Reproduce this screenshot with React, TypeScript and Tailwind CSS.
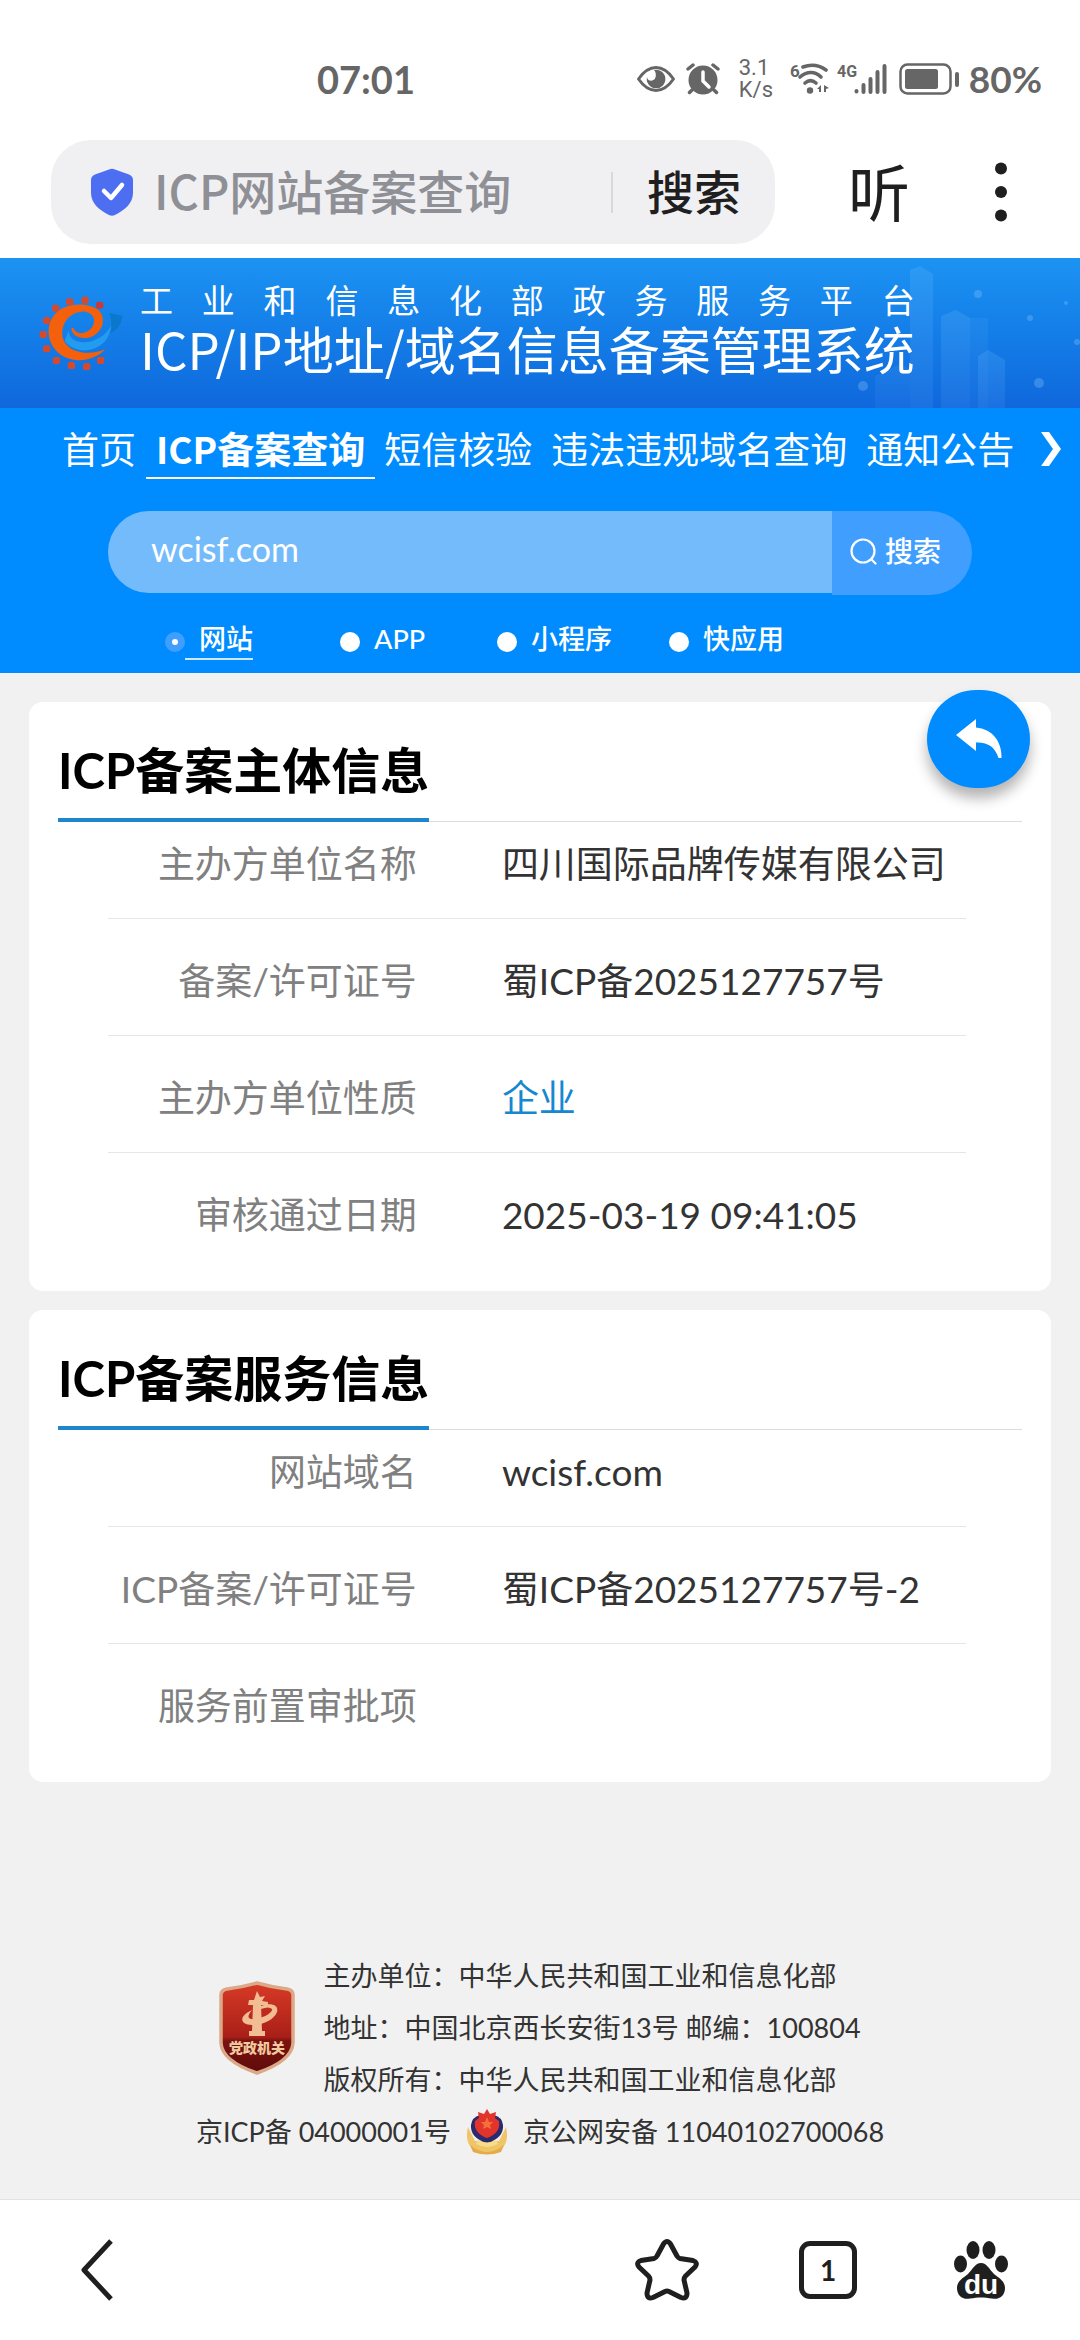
import React from "react";

const FONT = "font-[Lato,'Noto_Sans_CJK_SC',sans-serif]";
const CJK = "font-['Noto_Sans_CJK_SC',sans-serif]";

function StatusBar() {
  return (
    <div className="flex h-[140px] items-center pt-[18px] pr-[38px] pl-[317px] text-[#666]">
      <span className="text-[38px] leading-[48px] font-bold">07:01</span>
      <div className="ml-auto flex items-center">
        <svg width="40" height="28" viewBox="0 0 40 28" aria-hidden="true">
          <path d="M2.500 14C8 6 14 2.500 20 2.500S32 6 37.500 14C32 22 26 25.500 20 25.500S8 22 2.500 14Z" fill="none" stroke="#666" strokeWidth="3" strokeLinejoin="round" />
          <path d="M18 5A9.300 9.300 0 1 1 11 12C11 16 17 17 19 13.500C20.500 11 20 7 18 5Z" fill="#666" />
        </svg>
        <svg className="ml-[9px]" width="36" height="32" viewBox="0 0 36 32" aria-hidden="true">
          <circle cx="18" cy="17" r="14.500" fill="#666" />
          <path d="M3 6L8 2M33 6L28 2M7 27L4.500 29.500M29 27L31.500 29.500" stroke="#666" strokeWidth="3.500" strokeLinecap="round" />
          <path d="M18 9V18L24 24" fill="none" stroke="#fff" strokeWidth="3.500" strokeLinecap="round" />
        </svg>
        <div className="ml-[18px] flex w-[36px] flex-col font-[Roboto,sans-serif] text-[22px] leading-[22px]">
          <span>3.1</span>
          <span>K/s</span>
        </div>
        <svg className="ml-[15px]" width="40" height="36" viewBox="0 0 40 36" aria-hidden="true">
          <text x="0" y="16" fontSize="17" fontWeight="700" fontFamily="Roboto, sans-serif" fill="#666">6</text>
          <g fill="none" stroke="#666" strokeWidth="3.600" strokeLinecap="round">
            <path d="M13 6C21 3 29 4 36 9" />
            <path d="M10 16C17 10 25 10 31 16" />
            <path d="M15 22C18.500 19 22.500 19 26 22" />
          </g>
          <circle cx="20" cy="29.500" r="3.200" fill="#666" />
          <path d="M31 24V31H29V28L27 28ZM34 24V31H36V28L39 27Z" fill="#666" />
        </svg>
        <svg className="ml-[7px]" width="52" height="36" viewBox="0 0 52 36" aria-hidden="true">
          <text x="0" y="16" fontSize="16" fontWeight="700" fontFamily="Roboto, sans-serif" fill="#666">4G</text>
          <path d="M19.500 30V30.500M26.500 24V31M33.500 18V31M40.500 11V31M47.500 5V31" stroke="#666" strokeWidth="4" strokeLinecap="round" />
        </svg>
        <svg className="ml-[10px]" width="62" height="34" viewBox="0 0 62 34" aria-hidden="true">
          <rect x="1.500" y="2.500" width="50" height="29" rx="7" fill="none" stroke="#666" strokeWidth="2.500" />
          <rect x="6" y="7" width="33" height="20" rx="2.500" fill="#666" />
          <rect x="56" y="10" width="4" height="15" rx="2" fill="#666" />
        </svg>
        <span className="ml-[8px] text-[37px] leading-[48px] font-bold">80%</span>
      </div>
    </div>
  );
}

function BrowserBar() {
  return (
    <div className={`flex items-center pr-[72px] pb-[14px] pl-[51px] ${CJK}`}>
      <form className="flex h-[104px] min-w-0 flex-1 items-center rounded-[40px] bg-[#f0f0f2] pr-[34px] pl-[39px]" onSubmit={(e) => e.preventDefault()}>
        <svg className="shrink-0" width="44" height="48" viewBox="0 0 44 48" aria-hidden="true">
          <path d="M19 1.500Q22 0 25 1.500L39 6.500Q43 8 43 12V25C43 35 35 42 25 47Q22 48.500 19 47C9 42 1 35 1 25V12Q1 8 5 6.500Z" fill="#4e6ef2" />
          <path d="M14 23L21 30L32 17" fill="none" stroke="#fff" strokeWidth="4.500" strokeLinecap="round" strokeLinejoin="round" />
        </svg>
        <input aria-label="搜索内容" defaultValue="ICP网站备案查询" className="ml-[20px] min-w-0 flex-1 bg-transparent pb-[4px] text-[47px] leading-[64px] font-medium text-[#8f8f96] outline-none" />
        <span className="h-[41px] w-[2px] bg-[#d8d8dc]" />
        <button type="submit" className="ml-[34px] pb-[4px] text-[47px] leading-[64px] font-medium text-[#1f1f1f]">搜索</button>
      </form>
      <button type="button" className="ml-[73px] pb-[5px] text-[62px] leading-[80px] text-[#1f1f1f]">听</button>
      <button type="button" aria-label="更多" className="ml-[84px]">
        <svg width="14" height="60" viewBox="0 0 14 60"><g fill="#1f1f1f"><circle cx="7" cy="6.500" r="6" /><circle cx="7" cy="30" r="6" /><circle cx="7" cy="53.500" r="6" /></g></svg>
      </button>
    </div>
  );
}

function GearLogo() {
  const teeth = [[233, 74], [189, 59], [143, 64], [101, 83], [74, 120], [64, 162], [74, 205], [103, 240], [148, 255], [194, 258], [236, 240]];
  return (
    <svg className="shrink-0" width="88" height="80" viewBox="48 38 264 240" aria-hidden="true">
      <path d="M262 98L300 106Q302 140 262 160Q274 128 262 98Z" fill="#0b78cc" />
      <path d="M140 150C138 200 235 200 268 135C262 215 165 232 128 182Z" fill="#239bee" />
      {teeth.map(([x, y], i) => (
        <rect key={i} x={x - 11} y={y - 10} width="22" height="21" rx="7" fill={i === 0 ? "#c53b3a" : "#d64a2c"} />
      ))}
      <path d="M250 207C215 245 150 250 112 220C72 188 70 130 102 98C135 65 205 65 232 92C252 115 243 150 215 166C188 180 152 172 148 146Q150 138 156 146C168 168 200 158 212 138C226 112 205 92 178 94C136 98 112 140 124 178C142 220 205 226 250 207Z" fill="#f4600c" />
    </svg>
  );
}

function Banner() {
  return (
    <header className="relative flex h-[150px] items-center overflow-hidden bg-linear-to-b from-[#1c93f3] to-[#1068dc] pl-[38px] text-white">
      <svg className="absolute right-0 bottom-0" width="240" height="150" viewBox="0 0 240 150" aria-hidden="true">
        <defs>
          <linearGradient id="tower" x1="0" y1="0" x2="0" y2="1">
            <stop offset="0" stopColor="#6fc0ff" stopOpacity="0.2" />
            <stop offset="1" stopColor="#6fb0ff" stopOpacity="0.12" />
          </linearGradient>
        </defs>
        <g fill="url(#tower)">
          <path d="M70 12L80 8L93 16V150H70Z" />
          <path d="M101 58L116 52L130 60V150H101Z" />
          <path d="M130 60H148V150H130Z" opacity="0.5" />
          <path d="M138 98L148 92L165 102V150H138Z" />
          <path d="M35 118L60 106L70 112V150H35Z" opacity="0.6" />
        </g>
        <g fill="#8fcaff" opacity="0.3">
          <circle cx="138" cy="36" r="4" /><circle cx="190" cy="60" r="3" /><circle cx="226" cy="45" r="2" /><circle cx="199" cy="125" r="5" /><circle cx="23" cy="128" r="5" /><circle cx="237" cy="84" r="3" />
        </g>
      </svg>
      <GearLogo />
      <div className={`relative ml-[14px] pb-[14px] ${CJK}`}>
        <p className="text-[33px] leading-[44px] [text-align-last:justify]">工业和信息化部政务服务平台</p>
        <h1 className="text-[51px] leading-[54px] whitespace-nowrap">ICP/IP地址/域名信息备案管理系统</h1>
      </div>
    </header>
  );
}

const types = ["网站", "APP", "小程序", "快应用"];
const typeGaps = ["", "ml-[87px]", "ml-[72px]", "ml-[57px]"];

function QueryPanel() {
  return (
    <section className="bg-[#008cff] pb-[13px] text-white">
      <nav className={`flex items-start pt-[13px] pl-[62px] text-[37px] leading-[54px] whitespace-nowrap ${CJK}`}>
        <a href="#home">首页</a>
        <a href="#icp" className="ml-[10px] border-b-2 border-white px-[10px] pb-[2px] font-bold">ICP备案查询</a>
        <a href="#sms" className="ml-[9px]">短信核验</a>
        <a href="#illegal" className="ml-[19px]">违法违规域名查询</a>
        <a href="#notice" className="ml-[19px]">通知公告</a>
        <button type="button" aria-label="下一页" className="mt-[10px] mr-[18px] ml-auto">
          <svg width="22" height="36" viewBox="0 0 22 36"><path d="M1 1H9L21 18L9 35H1L13 18Z" fill="#fff" /></svg>
        </button>
      </nav>
      <form className="mx-[108px] mt-[32px] flex items-start" onSubmit={(e) => e.preventDefault()}>
        <input aria-label="域名" defaultValue="wcisf.com" className="h-[82px] min-w-0 flex-1 rounded-l-[41px] bg-[#74bbfb] pb-[8px] pl-[43px] text-[34px] leading-[48px] text-white outline-none" />
        <button type="submit" className="flex h-[84px] w-[140px] items-center gap-[8px] rounded-r-[42px] bg-[#409eff] pb-[4px] pl-[18px]">
          <svg width="27" height="27" viewBox="0 0 27 27" fill="none" stroke="#fff" strokeWidth="2.200" strokeLinecap="round" aria-hidden="true"><circle cx="13" cy="13" r="11.500" /><path d="M21.500 21.500L25.500 25.500" /></svg>
          <span className="text-[28px] leading-[40px] font-medium">搜索</span>
        </button>
      </form>
      <div className="mt-[25px] flex pl-[165px] text-[27px] leading-[38px] font-medium">
        {types.map((t, i) => (
          <label key={t} className={`flex items-center ${typeGaps[i]}`}>
            <input type="radio" name="type" defaultChecked={i === 0} className="mt-[4px] size-[20px] appearance-none rounded-full bg-white checked:border-[7px] checked:border-[#409eff]" />
            <span className={i === 0 ? "border-b-2 border-white/80 pl-[14px]" : "border-b-2 border-transparent pl-[14px]"}>{t}</span>
          </label>
        ))}
      </div>
    </section>
  );
}

type Row = { label: string; value: string; accent?: boolean };

function InfoCard({ title, rows, children }: { title: string; rows: Row[]; children?: React.ReactNode }) {
  return (
    <section className="relative mx-[29px] rounded-[14px] bg-white px-[29px] pt-[36px] pb-[22px]">
      <div className="flex border-b border-[#dcdcdc]">
        <h2 className="-mb-px border-b-4 border-[#2086cc] pb-[16px] text-[49px] leading-[64px] font-bold whitespace-nowrap text-black">{title}</h2>
      </div>
      <dl className="mr-[56px] ml-[50px] text-[37px] leading-[56px]">
        {rows.map((r) => (
          <div key={r.label} className="flex border-b border-[#e6e6e6] pt-[34px] pb-[26px] first:pt-[14px] last:border-b-0">
            <dt className="w-[36%] shrink-0 text-right whitespace-nowrap text-[#808080]">{r.label}</dt>
            <dd className={r.accent ? "ml-[85px] text-[#1688cf]" : "ml-[85px] whitespace-nowrap text-[#333]"}>{r.value}</dd>
          </div>
        ))}
      </dl>
      {children}
    </section>
  );
}

function ReturnButton() {
  return (
    <button type="button" aria-label="返回" className="absolute -top-[12px] right-[21px] flex h-[98px] w-[103px] items-center justify-center rounded-full bg-[#008cff] shadow-[0_10px_14px_rgba(0,0,0,0.3)]">
      <svg width="46" height="40" viewBox="0 0 46 40"><path d="M0 16L20 0V8.500C36 10 46 22 45.500 39H42.500C39 28 32 23 20 23.500V32Z" fill="#fff" /></svg>
    </button>
  );
}

function PartyBadge() {
  return (
    <svg className="shrink-0" width="76" height="94" viewBox="0 0 76 94" aria-hidden="true">
      <defs>
        <linearGradient id="badge" x1="0" y1="0" x2="0" y2="1">
          <stop offset="0" stopColor="#d83a26" /><stop offset="0.600" stopColor="#a81f18" /><stop offset="0.640" stopColor="#7c120f" /><stop offset="1" stopColor="#5d0c0a" />
        </linearGradient>
      </defs>
      <path d="M2 14Q2 9 8 8Q24 6 38 2Q52 6 68 8Q74 9 74 14V62Q73 80 38 92Q3 80 2 62Z" fill="url(#badge)" stroke="#dba987" strokeWidth="3.500" strokeLinejoin="round" />
      <path d="M38 10L41 16L46 15L43 20L49 21V24H42L43 50H46V55H30V50H33L34 24H29L30 19L35 19Z" fill="#f3bd93" />
      <path d="M42 25C52 21 60 24 58 31C55 39 44 44 33 44C20 43 20 35 33 29C27 36 29 39 37 38C47 36 54 31 53 28Q50 25 42 28Z" fill="#f3bd93" />
      <text x="38" y="72" textAnchor="middle" fontSize="14" fontWeight="900" fontFamily="'Noto Sans CJK SC', sans-serif" fill="#f0c9a0">党政机关</text>
    </svg>
  );
}

function PoliceBadge() {
  return (
    <svg className="shrink-0" width="44" height="46" viewBox="0 0 44 46" aria-hidden="true">
      <path d="M3 18C-1 34 6 44 22 45C38 44 45 34 41 18L34 32H10Z" fill="#efc567" />
      <path d="M5 36Q22 50 39 36L36 43Q22 48 8 43Z" fill="#e3ac48" />
      <path d="M6 16Q7 8 15 6H29Q37 8 38 16Q39 29 22 34Q5 29 6 16Z" fill="#2b2a6e" />
      <path d="M22 0L25 5L31 3L30 9L34 12Q36 24 22 29Q8 24 10 12L14 9L13 3L19 5Z" fill="#e3342b" />
      <path d="M22 8L24 13L28 13L25 16L26 20L22 18L18 20L19 16L16 13L20 13Z" fill="#f4703a" />
      <path d="M13 31Q22 36 31 31L33 35Q22 41 11 35Z" fill="#f8dc8a" />
    </svg>
  );
}

function SiteFooter() {
  return (
    <footer className="mx-auto mt-auto flex flex-col items-center pb-[41px] text-[27px] leading-[52px] whitespace-nowrap text-[#333]">
      <div className="flex items-center gap-[28px]">
        <PartyBadge />
        <div>
          <p>主办单位：中华人民共和国工业和信息化部</p>
          <p>地址：中国北京西长安街13号 邮编：100804</p>
          <p>版权所有：中华人民共和国工业和信息化部</p>
        </div>
      </div>
      <div className="flex items-center gap-[14px]">
        <a href="#beian">京ICP备 04000001号</a>
        <PoliceBadge />
        <a href="#gongan">京公网安备 11040102700068</a>
      </div>
    </footer>
  );
}

function BottomBar() {
  return (
    <nav className="flex h-[141px] items-center border-t border-[#e2e2e2] bg-white pr-[71px] pl-[80px]">
      <button type="button" aria-label="后退">
        <svg width="34" height="64" viewBox="0 0 34 64" fill="none" stroke="#1f1f1f" strokeWidth="5" strokeLinejoin="round"><path d="M31 3L4 32L31 61" /></svg>
      </button>
      <button type="button" aria-label="收藏" className="ml-auto">
        <svg width="64" height="62" viewBox="0 0 64 62" fill="none" stroke="#1f1f1f" strokeWidth="5" strokeLinejoin="round">
          <path d="M28.500 5Q32 0 35.500 5L42 17Q43 19 45 19.500L58 21.500Q63.500 23.500 60 28L50.500 37Q49 38.500 49 41L52 54Q52 60.500 46 58.500L34 52.500Q32 51.500 30 52.500L18 58.500Q12 60.500 12 54L15 41Q15 38.500 13.500 37L4 28Q0.500 23.500 6 21.500L19 19.500Q21 19 22 17Z" />
        </svg>
      </button>
      <button type="button" aria-label="标签页" className="ml-[100px] flex size-[58px] items-center justify-center rounded-[11px] border-[5px] border-[#1f1f1f] text-[28px] leading-[32px] font-bold text-[#1f1f1f]">1</button>
      <button type="button" aria-label="百度首页" className="ml-[96px]">
        <svg width="56" height="68" viewBox="0 -4 56 68">
          <g fill="#1f1f1f">
            <ellipse cx="20" cy="10" rx="6.500" ry="9" /><ellipse cx="36" cy="10" rx="6.500" ry="9" /><ellipse cx="7.500" cy="24" rx="6.500" ry="8.500" /><ellipse cx="48.500" cy="24" rx="6.500" ry="8.500" />
            <path d="M28 23C34 23 36 29 41 34C46 38 52 41 52 48C52 56 46 60 39 58.500C31 57 25 57 17 58.500C10 60 4 56 4 48C4 41 10 38 15 34C20 29 22 23 28 23Z" />
          </g>
          <text x="28" y="54" textAnchor="middle" fontSize="28" fontWeight="700" fontFamily="'Liberation Sans', sans-serif" fill="#fff">du</text>
        </svg>
      </button>
    </nav>
  );
}

export default function App() {
  return (
    <div className={`flex min-h-screen flex-col bg-[#f1f1f1] ${FONT}`}>
      <div className="bg-white">
        <StatusBar />
        <BrowserBar />
      </div>
      <Banner />
      <QueryPanel />
      <main className="mt-[29px] flex flex-col gap-[19px]">
        <InfoCard
          title="ICP备案主体信息"
          rows={[
            { label: "主办方单位名称", value: "四川国际品牌传媒有限公司" },
            { label: "备案/许可证号", value: "蜀ICP备2025127757号" },
            { label: "主办方单位性质", value: "企业", accent: true },
            { label: "审核通过日期", value: "2025-03-19 09:41:05" },
          ]}
        >
          <ReturnButton />
        </InfoCard>
        <InfoCard
          title="ICP备案服务信息"
          rows={[
            { label: "网站域名", value: "wcisf.com" },
            { label: "ICP备案/许可证号", value: "蜀ICP备2025127757号-2" },
            { label: "服务前置审批项", value: "" },
          ]}
        />
      </main>
      <SiteFooter />
      <BottomBar />
    </div>
  );
}
